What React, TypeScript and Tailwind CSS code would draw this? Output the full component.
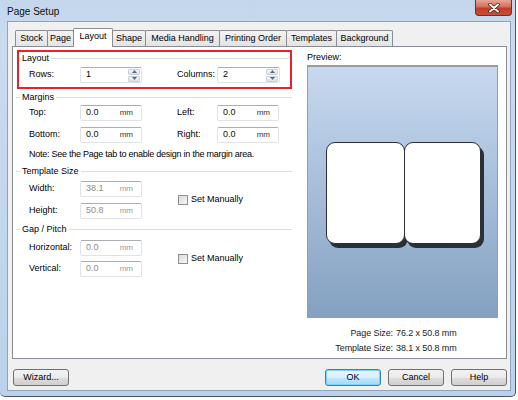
import React from "react";

const tabs = [
  { name: "Stock", w: "w-[33px]" },
  { name: "Page", w: "w-[27px]" },
  { name: "Layout", w: "w-[40px]" },
  { name: "Shape", w: "w-[34px]" },
  { name: "Media Handling", w: "w-[75px]" },
  { name: "Printing Order", w: "w-[68px]" },
  { name: "Templates", w: "w-[51px]" },
  { name: "Background", w: "w-[57px]" },
];

function GroupHeader({ label, lead = "w-[4px]" }: { label: string; lead?: string }) {
  return (
    <div className="flex items-center h-[12px]">
      <div className={`${lead} h-px bg-[#d5dfe5]`} />
      <span className="px-[2px] leading-none">{label}</span>
      <div className="flex-1 h-px bg-[#d5dfe5]" />
    </div>
  );
}

function TextBox({ value, disabled, w = "w-[62px]" }: { value: string; disabled?: boolean; w?: string }) {
  return (
    <div
      className={`${w} h-[16px] flex items-center bg-white rounded-[2px] border border-[#dfe3e8] border-t-[#abadb3] pl-[5px] pr-[8px] ${
        disabled ? "text-[#8c8c8c]" : "text-[#111]"
      }`}
    >
      <span>{value}</span>
      <span className={`ml-auto text-[8px] ${disabled ? "text-[#9a9a9a]" : "text-[#333]"}`}>mm</span>
    </div>
  );
}

function SpinBox({ value, w = "w-[62px]" }: { value: string; w?: string }) {
  return (
    <div className={`${w} h-[16px] flex items-center bg-white rounded-[2px] border border-[#dfe3e8] border-t-[#abadb3] pl-[5px] pr-px`}>
      <span>{value}</span>
      <div className="ml-auto flex flex-col gap-px">
        {["up", "down"].map((d) => (
          <div
            key={d}
            className="w-[12px] h-[6px] flex items-center justify-center rounded-[1px] border border-[#c9d0d8] bg-[linear-gradient(#f4f6f8,#dde3ea)]"
          >
            <svg width="5" height="3" viewBox="0 0 5 3">
              <path d={d === "up" ? "M0 3 L2.5 0 L5 3 Z" : "M0 0 L2.5 3 L5 0 Z"} fill="#5a6b80" />
            </svg>
          </div>
        ))}
      </div>
    </div>
  );
}

function Field({ label, lw = "w-[51px]", children }: { label: string; lw?: string; children: React.ReactNode }) {
  return (
    <div className="flex items-center h-[16px]">
      <span className={`${lw} shrink-0 whitespace-nowrap`}>{label}</span>
      {children}
    </div>
  );
}

function CheckBox({ label }: { label: string }) {
  return (
    <div className="flex items-center gap-[3px]">
      <div className="w-[10px] h-[10px] border border-[#8f8f8f] bg-[linear-gradient(135deg,#dcdcdc,#f6f6f6)]" />
      <span>{label}</span>
    </div>
  );
}

function Button({ label, primary }: { label: string; primary?: boolean }) {
  return (
    <div
      className={`w-[56px] h-[17px] flex items-center justify-center rounded-[3px] border ${
        primary
          ? "border-[#3c7fb1] shadow-[inset_0_0_0_1px_#7ed2f6] bg-[linear-gradient(#eaf6fd_0%,#d9f0fc_50%,#bee6fd_51%,#a7d9f5_100%)]"
          : "border-[#707070] bg-[linear-gradient(#f2f2f2_0%,#ebebeb_50%,#dddddd_51%,#cfcfcf_100%)]"
      }`}
    >
      {label}
    </div>
  );
}

export default function App() {
  return (
    <div className="w-[518px] h-[400px] bg-white text-[9px] text-black font-['Liberation_Sans',Arial,sans-serif] overflow-hidden">
      {/* window frame */}
      <div className="relative w-[516px] h-[397px] rounded-b-[5px] border-r border-b border-[#4b5766] bg-[linear-gradient(180deg,#c3d6ec_0%,#c9dbef_10%,#bcd2ea_100%)]">
        {/* title bar */}
        <div className="h-[21px] flex items-center pl-[7px] pt-[2px]">
          <span className="text-[10px] text-[#101010]">Page Setup</span>
        </div>
        <div className="absolute top-0 right-[3px] w-[37px] h-[16px] rounded-b-[4px] border border-t-0 border-[#7b2b22] bg-[linear-gradient(#e8a595_0%,#d56f5d_45%,#c33c27_55%,#c94d34_100%)] flex items-center justify-center">
          <svg width="12" height="10" viewBox="0 0 12 10">
            <path d="M2 1.5 L10 8.5 M10 1.5 L2 8.5" stroke="#3b1410" strokeWidth="3.4" strokeLinecap="round" />
            <path d="M2 1.5 L10 8.5 M10 1.5 L2 8.5" stroke="#ffffff" strokeWidth="2" strokeLinecap="round" />
          </svg>
        </div>

        {/* client area */}
        <div className="ml-[7px] w-[504px] h-[370px] bg-[#f0f0f0] border border-[#8ea3bc] pt-[6px] pl-[4px]">
          {/* tab strip */}
          <div className="ml-[3px] flex items-end h-[18px]">
            {tabs.map((t) => {
              const active = t.name === "Layout";
              return (
                <div
                  key={t.name}
                  className={`${t.w} -ml-px first:ml-0 flex items-center justify-center whitespace-nowrap border border-b-0 border-[#898c95] rounded-t-[2px] ${
                    active
                      ? "relative z-10 h-[19px] -mb-px bg-white pb-[2px]"
                      : "h-[16px] bg-[linear-gradient(#f3f3f3,#e3e3e3)] pt-px"
                  }`}
                >
                  {t.name}
                </div>
              );
            })}
          </div>

          {/* tab page */}
          <div className="w-[495px] h-[313px] bg-white border border-[#898c95] flex pl-[3px] pt-[3px]">
            {/* left column */}
            <div className="w-[276px] flex flex-col">
              <div className="ml-px border-2 border-[#e8212b] pr-[1px]">
                <GroupHeader label="Layout" lead="w-[1px]" />
                <div className="flex items-center pl-[10px] mt-[3px] mb-[4px]">
                  <Field label="Rows:">
                    <SpinBox value="1" />
                  </Field>
                  <div className="ml-[35px]">
                    <Field label="Columns:" lw="w-[40px]">
                      <SpinBox value="2" w="w-[63px]" />
                    </Field>
                  </div>
                </div>
              </div>

              <div className="mt-[2px]">
                <GroupHeader label="Margins" />
              </div>
              <div className="pl-[13px] flex flex-col">
                <div className="flex mt-[2px]">
                  <Field label="Top:">
                    <TextBox value="0.0" />
                  </Field>
                  <div className="ml-[35px]">
                    <Field label="Left:" lw="w-[40px]">
                      <TextBox value="0.0" />
                    </Field>
                  </div>
                </div>
                <div className="flex mt-[6px]">
                  <Field label="Bottom:">
                    <TextBox value="0.0" />
                  </Field>
                  <div className="ml-[35px]">
                    <Field label="Right:" lw="w-[40px]">
                      <TextBox value="0.0" />
                    </Field>
                  </div>
                </div>
                <div className="mt-[5px] h-[14px] flex items-center whitespace-nowrap tracking-[-0.25px]">
                  Note: See the Page tab to enable design in the margin area.
                </div>
              </div>

              <div className="mt-[3px]">
                <GroupHeader label="Template Size" />
              </div>
              <div className="pl-[13px] flex items-center mt-[4px]">
                <div className="flex flex-col gap-[6px]">
                  <Field label="Width:">
                    <TextBox value="38.1" disabled />
                  </Field>
                  <Field label="Height:">
                    <TextBox value="50.8" disabled />
                  </Field>
                </div>
                <div className="ml-[36px]">
                  <CheckBox label="Set Manually" />
                </div>
              </div>

              <div className="mt-[4px]">
                <GroupHeader label="Gap / Pitch" />
              </div>
              <div className="pl-[13px] flex items-center mt-[5px]">
                <div className="flex flex-col gap-[5px]">
                  <Field label="Horizontal:">
                    <TextBox value="0.0" disabled />
                  </Field>
                  <Field label="Vertical:">
                    <TextBox value="0.0" disabled />
                  </Field>
                </div>
                <div className="ml-[36px]">
                  <CheckBox label="Set Manually" />
                </div>
              </div>
            </div>

            {/* preview column */}
            <div className="ml-[15px] w-[191px] flex flex-col">
              <div className="mt-[2px] h-[12px] flex items-center">Preview:</div>
              <div className="mt-px h-[253px] border border-t-2 border-[#9b9b9b] bg-[linear-gradient(180deg,#c7d9ef_0%,#a9c0dc_45%,#84a1c0_100%)] flex items-center justify-center pl-[1px] pt-[2px]">
                <div className="flex">
                  <div className="w-[79px] h-[102px] rounded-[9px] border border-[#2b2f35] bg-white shadow-[3px_4px_0_#2a3038]" />
                  <div className="-ml-px w-[77px] h-[102px] rounded-[9px] border border-[#2b2f35] bg-white shadow-[3px_4px_0_#2a3038]" />
                </div>
              </div>
              <div className="mt-[9px] grid grid-cols-[86px_1fr] gap-x-[3px] text-[#222] tracking-[-0.1px]">
                <span className="text-right h-[15px]">Page Size:</span>
                <span className="h-[15px]">76.2 x 50.8 mm</span>
                <span className="text-right h-[15px]">Template Size:</span>
                <span className="h-[15px]">38.1 x 50.8 mm</span>
              </div>
            </div>
          </div>

          {/* dialog buttons */}
          <div className="w-[495px] mt-[10px] flex pl-[1px]">
            <Button label="Wizard..." />
            <div className="ml-auto flex gap-[7px]">
              <Button label="OK" primary />
              <Button label="Cancel" />
              <Button label="Help" />
            </div>
          </div>
        </div>
      </div>
    </div>
  );
}
